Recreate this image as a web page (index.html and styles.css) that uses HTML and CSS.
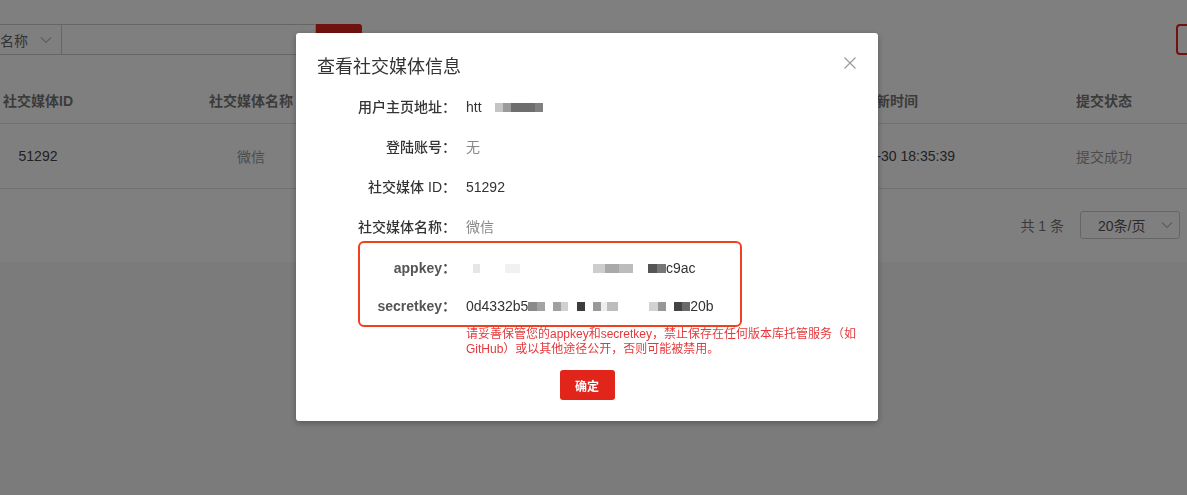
FILE: index.html
```html
<!DOCTYPE html>
<html lang="zh">

<head>
    <meta charset="UTF-8">
    <meta name="viewport" content="width=device-width, initial-scale=1.0">
    <title>社交媒体</title>
    <link rel="stylesheet" href="styles.css">
</head>

<body>
    <div class="panel">
        <div class="toolbar">
            <div class="search">
                <div class="search-select">
                    <span>名称</span>
                    <svg class="chevron" width="12" height="8" viewBox="0 0 12 8"><path d="M1 1.5l5 5 5-5" fill="none" stroke="#bbb" stroke-width="1.2"/></svg>
                </div>
                <div class="search-input"></div>
                <div class="search-btn"></div>
            </div>
            <div class="btn-outline"></div>
        </div>

        <!-- The table of social media -->
        <div class="table">
            <div class="tr th">
                <div>社交媒体ID</div>
                <div>社交媒体名称</div>
                <div>用户主页地址</div>
                <div>登陆账号</div>
                <div>更新时间</div>
                <div>提交状态</div>
            </div>
            <div class="tr">
                <div>51292</div>
                <div class="muted">微信</div>
                <div>http://</div>
                <div class="muted">无</div>
                <div>2019-05-30 18:35:39</div>
                <div class="muted">提交成功</div>
            </div>
        </div>

        <div class="pager">
            <span class="total">共 1 条</span>
            <div class="page-size">
                <span>20条/页</span>
                <svg class="chevron" width="12" height="8" viewBox="0 0 12 8"><path d="M1 1.5l5 5 5-5" fill="none" stroke="#bbb" stroke-width="1.2"/></svg>
            </div>
        </div>
    </div>

    <!-- The dialog with the social media details -->
    <div class="mask">
        <div class="dialog">
            <div class="dialog-head">
                <h2>查看社交媒体信息</h2>
                <svg class="close" width="12" height="12" viewBox="0 0 12 12"><path d="M0.5 0.5l11 11M11.5 0.5l-11 11" stroke="#999" stroke-width="1.1"/></svg>
            </div>

            <div class="rows">
                <div class="row">
                    <span class="label">用户主页地址：</span>
                    <span class="value mosaic">htt<i class="px" style="margin-left:13px;width:8px;background:#c4c4c4"></i><i class="px" style="width:8px;background:#9a9a9a"></i><i class="px" style="width:24px;background:#6e6e6e"></i><i class="px" style="width:8px;background:#808080"></i></span>
                </div>
                <div class="row">
                    <span class="label">登陆账号：</span>
                    <span class="value light">无</span>
                </div>
                <div class="row">
                    <span class="label">社交媒体 ID：</span>
                    <span class="value">51292</span>
                </div>
                <div class="row">
                    <span class="label">社交媒体名称：</span>
                    <span class="value light">微信</span>
                </div>
            </div>

            <div class="keybox">
                <div class="row key-row">
                    <span class="label key">appkey：</span>
                    <span class="value mosaic"><i class="px" style="margin-left:7px;width:7px;background:#e6e6e6"></i><i class="px" style="margin-left:25px;width:15px;background:#f1f1f1"></i><i class="px" style="margin-left:73px;width:12px;background:#cdcdcd"></i><i class="px" style="width:14px;background:#a9a9a9"></i><i class="px" style="width:14px;background:#bcbcbc"></i><i class="px" style="margin-left:15px;width:9px;background:#555"></i><i class="px" style="width:9px;background:#777"></i>c9ac</span>
                </div>
                <div class="row key-row">
                    <span class="label key">secretkey：</span>
                    <span class="value mosaic">0d4332b5<i class="px" style="width:9px;background:#8a8a8a"></i><i class="px" style="width:8px;background:#a3a3a3"></i><i class="px" style="margin-left:8px;width:8px;background:#a0a0a0"></i><i class="px" style="width:7px;background:#d0d0d0"></i><i class="px" style="margin-left:9px;width:8px;background:#3c3c3c"></i><i class="px" style="margin-left:8px;width:8px;background:#999"></i><i class="px" style="width:6px;background:#eee"></i><i class="px" style="width:11px;background:#bdbdbd"></i><i class="px" style="margin-left:31px;width:9px;background:#d2d2d2"></i><i class="px" style="width:8px;background:#979797"></i><i class="px" style="margin-left:8px;width:8px;background:#444"></i><i class="px" style="width:8px;background:#6a6a6a"></i>20b</span>
                </div>
            </div>

            <p class="warning">请妥善保管您的appkey和secretkey，禁止保存在任何版本库托管服务（如<br>GitHub）或以其他途径公开，否则可能被禁用。</p>

            <button class="ok-button">确定</button>
        </div>
    </div>
</body>

</html>
```

FILE: styles.css
```css
/* The basic style of the page */
body {
    font-family: 'Liberation Sans', 'Noto Sans CJK SC', sans-serif;
    margin: 0;
    padding: 0;
    background-color: #f6f6f6;
    color: #333;
    font-size: 14px;
    overflow: hidden;
    height: 495px;
}

/* The white panel behind the dialog */
.panel {
    background-color: #fff;
    padding: 24px 0 23px;
}

/* The search bar */
.toolbar {
    display: flex;
    height: 31px;
}

.search {
    display: flex;
}

.search-select {
    width: 62px;
    box-sizing: border-box;
    border: 1px solid #ccc;
    border-left: none;
    display: flex;
    align-items: center;
    color: #666;
}

.search-select .chevron {
    margin-left: 12px;
}

.search-input {
    width: 254px;
    box-sizing: border-box;
    border: 1px solid #ccc;
    border-left: none;
}

.search-btn {
    width: 46px;
    background-color: #e1251b;
    border-radius: 0 3px 3px 0;
}

.btn-outline {
    margin-left: auto;
    margin-right: -69px;
    width: 80px;
    box-sizing: border-box;
    border: 2px solid #e1251b;
    border-radius: 4px;
}

/* The table */
.table {
    margin-top: 21px;
}

.tr {
    display: grid;
    grid-template-columns: 76px 350px 187px 187px 180px 248px;
    height: 64px;
    align-items: center;
    border-bottom: 1px solid #e2e2e2;
    white-space: nowrap;
    color: #444;
}

.tr div {
    text-align: center;
}

.tr.th {
    height: 47px;
    font-weight: bold;
    color: #777;
}

.muted {
    color: #999;
}

/* The pagination */
.pager {
    display: flex;
    justify-content: flex-end;
    align-items: center;
    margin-top: 22px;
    padding-right: 7px;
}

.total {
    color: #777;
    margin-right: 16px;
}

.page-size {
    width: 100px;
    height: 28px;
    box-sizing: border-box;
    border: 1px solid #ccc;
    border-radius: 3px;
    display: flex;
    align-items: center;
    padding-left: 17px;
    color: #555;
}

.page-size .chevron {
    margin-left: 16px;
}

/* The dark layer over the page */
.mask {
    position: fixed;
    top: 0;
    left: 0;
    right: 0;
    bottom: 0;
    background-color: rgba(0, 0, 0, 0.5);
}

/* The dialog */
.dialog {
    margin: 33px 0 0 296px;
    width: 582px;
    background-color: #fff;
    border-radius: 3px;
    box-shadow: 0 2px 6px rgba(0, 0, 0, 0.3);
    padding-bottom: 21px;
}

.dialog-head {
    position: relative;
    padding: 20px 21px 0;
}

.dialog-head h2 {
    margin: 0;
    font-size: 18px;
    line-height: 24px;
    font-weight: normal;
    color: #333;
    font-family: 'Noto Sans CJK SC', sans-serif;
}

.close {
    position: absolute;
    top: 24px;
    right: 22px;
}

.rows {
    margin-top: 16px;
}

.row {
    display: grid;
    grid-template-columns: 160px 1fr;
    column-gap: 10px;
    height: 28px;
    line-height: 28px;
    margin-bottom: 12px;
}

.rows .row:last-child {
    margin-bottom: 0;
}

.label {
    text-align: right;
    font-weight: 500;
    color: #333;
    white-space: nowrap;
}

.value {
    color: #333;
    white-space: nowrap;
}

.value.light {
    color: #888;
}

.mosaic {
    display: flex;
    align-items: center;
}

.px {
    display: inline-block;
    height: 9px;
}

/* The red box with the keys */
.keybox {
    margin-left: 62px;
    width: 384px;
    box-sizing: border-box;
    border: 2px solid #f2401f;
    border-radius: 6px;
    padding-top: 6px;
}

.key-row {
    grid-template-columns: 96px 1fr;
    height: 38px;
    line-height: 38px;
    margin-bottom: 0;
}

.label.key {
    font-weight: bold;
    color: #555;
}

.warning {
    margin: 0 0 0 170px;
    font-size: 12px;
    line-height: 15px;
    color: #e4393c;
    white-space: nowrap;
}

/* The style of button */
.ok-button {
    display: block;
    margin: 13px auto 0;
    width: 55px;
    height: 30px;
    border: none;
    border-radius: 3px;
    background-color: #e1251b;
    color: white;
    font-size: 12px;
    font-weight: bold;
    font-family: 'Noto Sans CJK SC', sans-serif;
    cursor: pointer;
}
```
